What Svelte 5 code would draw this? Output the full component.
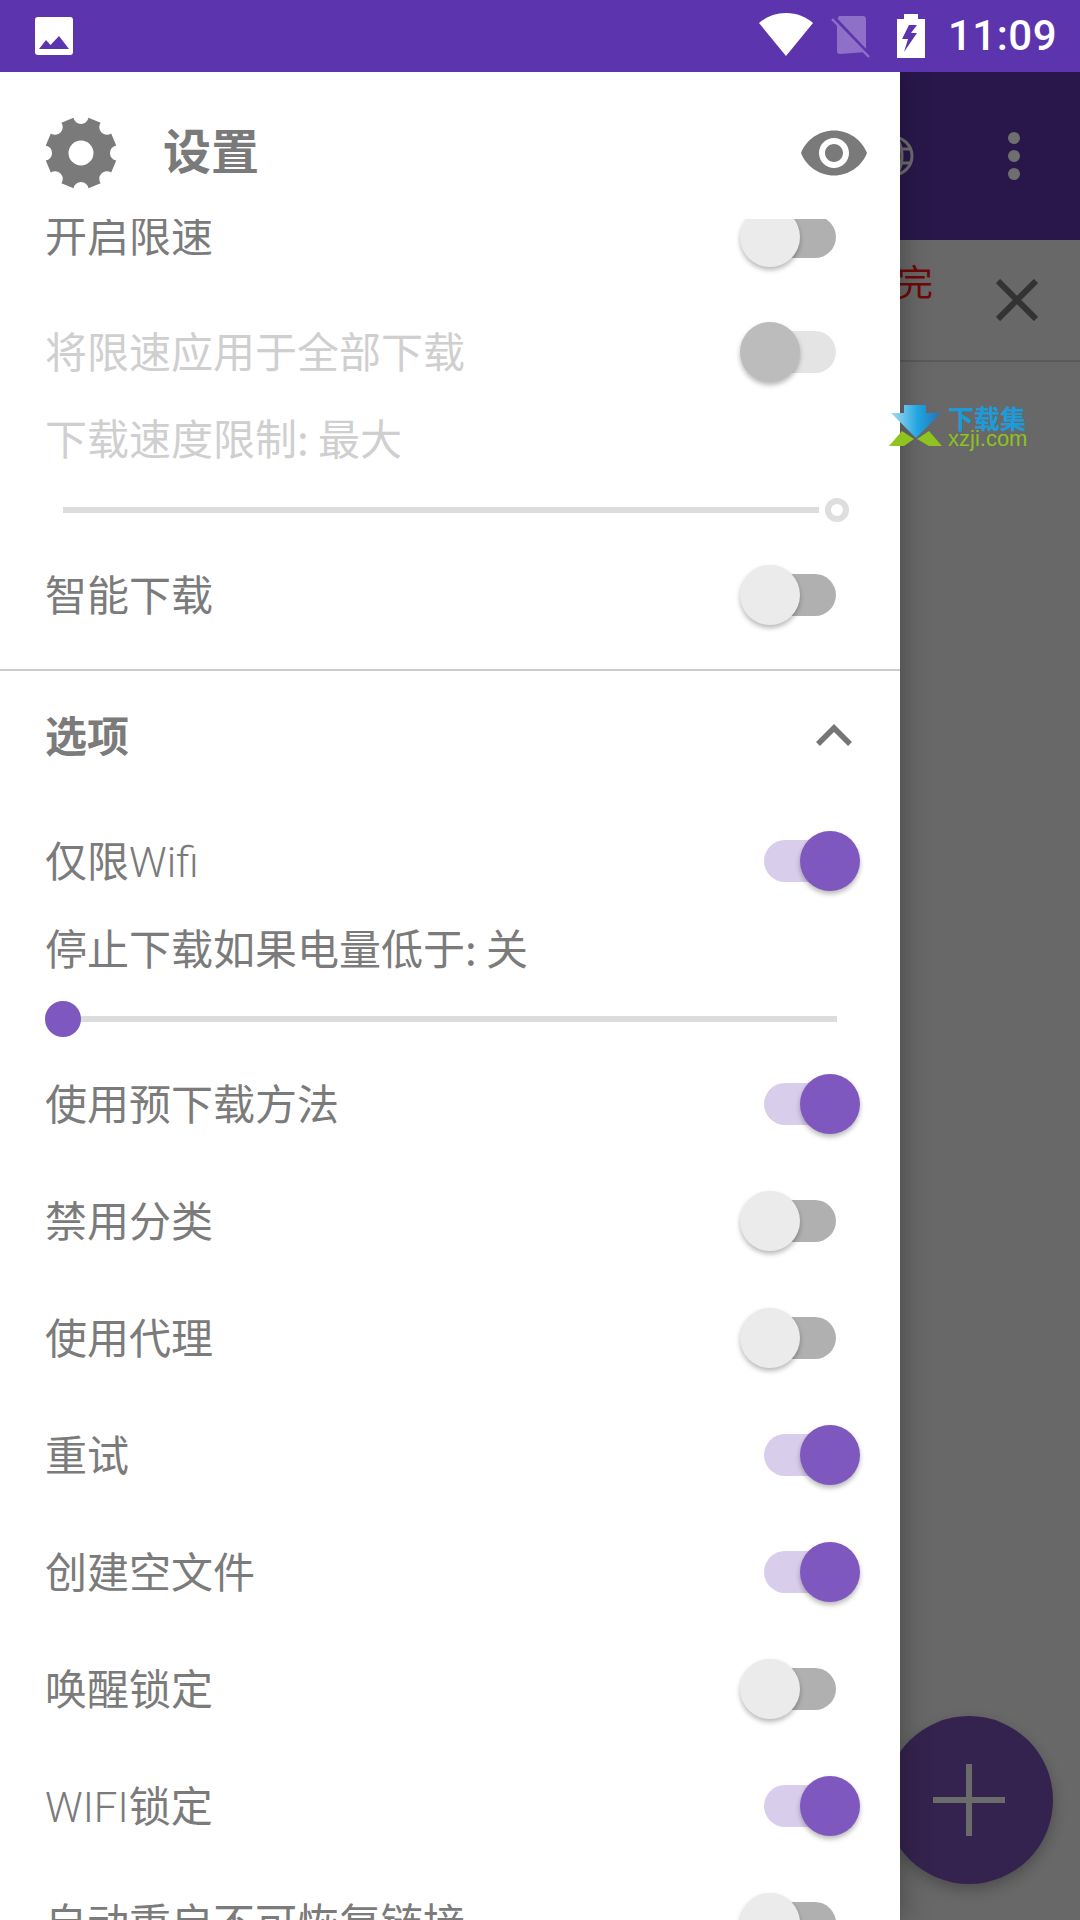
<script>
  const c = 36, R = 36;
  function gear() {
    let d = '';
    const half = 12 * Math.PI / 180;
    for (let i = 0; i < 8; i++) {
      const a = -Math.PI / 2 + i * Math.PI / 4;
      const p1 = [c + R * Math.cos(a - half), c + R * Math.sin(a - half)];
      const p2 = [c + R * Math.cos(a + half), c + R * Math.sin(a + half)];
      d += (i === 0 ? 'M' : 'L') + p1[0].toFixed(2) + ' ' + p1[1].toFixed(2);
      d += 'A7.6 7.6 0 0 0 ' + p2[0].toFixed(2) + ' ' + p2[1].toFixed(2);
    }
    return d + 'Z';
  }
  const gearPath = gear();
  const lower = [
    ['使用预下载方法', '', '', true],
    ['禁用分类', '', '', false],
    ['使用代理', '', '', false],
    ['重试', '', '', true],
    ['创建空文件', '', '', true],
    ['唤醒锁定', '', '', false],
    ['', 'WIFI', '锁定', true],
    ['自动重启不可恢复链接', '', '', false]
  ];
</script>

<div class="screen">
  <header class="status">
    <svg class="pic" viewBox="0 0 38 38"><path fill="#fff" d="M3 0h32a3 3 0 0 1 3 3v32a3 3 0 0 1-3 3H3a3 3 0 0 1-3-3V3a3 3 0 0 1 3-3z"/><path fill="#5c35ae" d="M4 32l7-9 4.500 5L24 19l10 13z"/></svg>
    <div class="status-right">
      <svg class="wifi" viewBox="0 0 54 44"><path fill="#fff" d="M27 43L0 10C7 4 16 0 27 0s20 4 27 10z"/></svg>
      <svg class="sim" viewBox="0 0 42 44"><path fill="#8e70c9" d="M9 2h24a3 3 0 0 1 3 3v33l-26 2a3 3 0 0 1-3-3V6z"/><path stroke="#5c35ae" stroke-width="4" d="M3 3l36 38"/><path stroke="#8e70c9" stroke-width="2.500" d="M2 5l37 38"/></svg>
      <svg class="batt" viewBox="0 0 28 44"><path fill="#fff" d="M7 0h14v5h7v39H0V5h7z"/><path fill="#5c35ae" d="M12 11h8l-6 8h6L7 38l4-13H5z"/></svg>
      <span class="time">11:09</span>
    </div>
  </header>

  <main class="stage">
    <section class="app">
      <div class="appbar">
        <svg class="globe" viewBox="0 0 44 44" fill="none" stroke="#6f6f6f" stroke-width="3"><circle cx="22" cy="22" r="19"/><ellipse cx="22" cy="22" rx="9" ry="19"/><path d="M4 15h36M4 29h36"/></svg>
        <div class="dots"><i></i><i></i><i></i></div>
      </div>
      <div class="task">
        <span class="done">完</span>
        <svg class="close" viewBox="0 0 42 42"><path stroke="#333" stroke-width="6" d="M2 2l38 38M40 2L2 40"/></svg>
      </div>
    </section>

    <div class="fab"><svg viewBox="0 0 72 72"><path fill="#6b6b6b" d="M33 0h6v33h33v6H39v33h-6V39H0v-6h33z"/></svg></div>

    <aside class="drawer">
      <div class="drawer-head">
        <svg class="gear" viewBox="0 0 72 72"><path fill="#7a7a7a" fill-rule="evenodd" d={gearPath + ' M36 23.500a12.500 12.500 0 1 0 0 25a12.500 12.500 0 1 0 0-25Z'}/></svg>
        <h1>设置</h1>
        <svg class="eye" viewBox="0 0 24 24"><path fill="#7a7a7a" d="M12 4.500C7 4.500 2.730 7.610 1 12c1.730 4.390 6 7.500 11 7.500s9.270-3.110 11-7.500c-1.730-4.390-6-7.500-11-7.500zM12 17c-2.760 0-5-2.240-5-5s2.240-5 5-5 5 2.240 5 5-2.240 5-5 5zm0-8c-1.660 0-3 1.340-3 3s1.340 3 3 3 3-1.340 3-3-1.340-3-3-3z"/></svg>
      </div>
      <div class="scroll">
        <div class="list">
          <div class="row first"><span class="t">开启限速</span><div class="sw"><b></b><u></u></div></div>
          <div class="row first disabled"><span class="t dt">将限速应用于全部下载</span><div class="sw dis"><b></b><u></u></div></div>
          <div class="label disabled lim">下载速度限制: 最大</div>
          <div class="slider end"><div class="track"></div><div class="ring"></div></div>
          <div class="row smart"><span class="t">智能下载</span><div class="sw"><b></b><u></u></div></div>
          <hr />
          <div class="section"><strong>选项</strong><svg class="chev" viewBox="0 0 38 24" fill="none" stroke="#757575" stroke-width="5.5"><path d="M3 21L19 5l16 16"/></svg></div>
          <div class="row wifi-row"><span class="t">仅限<span class="lat">Wifi</span></span><div class="sw on"><b></b><u></u></div></div>
          <div class="label stop">停止下载如果电量低于: 关</div>
          <div class="slider start"><div class="dot"></div><div class="track"></div></div>
          {#each lower as [text, lat, tail, on]}
            <div class="row"><span class="t">{text}{#if lat}<span class="lat">{lat}</span>{tail}{/if}</span><div class="sw" class:on><b></b><u></u></div></div>
          {/each}
        </div>
      </div>
    </aside>

    <div class="mark">
      <svg viewBox="0 0 54 44"><defs><linearGradient id="ar" x1="0" x2="1" y1="0" y2="0"><stop offset="0" stop-color="#a8dcf2"/><stop offset=".55" stop-color="#1ea4de"/><stop offset="1" stop-color="#2a6fb8"/></linearGradient></defs><path fill="url(#ar)" d="M15 1h22v8h15L27 34 2 9h13z"/><path fill="#8fc31f" d="M0 42l13-15 12 8-10 7zM28 35l12-8 13 15H40z"/></svg>
      <div class="mark-text"><span class="cn">下载集</span><span class="en">xzji.com</span></div>
    </div>
  </main>
</div>

<style>
  :global(body) { margin: 0; background: #666; }
  .screen { width: 1080px; height: 1920px; overflow: hidden; display: flex; flex-direction: column; font-family: "Noto Sans CJK SC", Roboto, sans-serif; }
  .status { height: 72px; flex: none; background: #5c35ae; display: flex; align-items: center; justify-content: space-between; padding: 0 23px 0 35px; box-sizing: border-box; }
  .pic { width: 38px; height: 38px; }
  .status-right { display: flex; align-items: center; }
  .wifi { width: 54px; height: 44px; margin-top: -2px; }
  .sim { width: 42px; height: 44px; margin-left: 17px; }
  .batt { width: 28px; height: 44px; margin-left: 25px; }
  .time { color: #fff; font-family: Roboto, sans-serif; font-size: 42px; font-weight: 500; letter-spacing: .5px; margin-left: 23px; line-height: 72px; }

  .stage { position: relative; flex: 1; overflow: hidden; }
  .app { height: 100%; background: #686868; }
  .appbar { height: 168px; background: #29174b; display: flex; align-items: center; justify-content: flex-end; padding-right: 60px; box-sizing: border-box; position: relative; }
  .globe { width: 44px; height: 44px; position: absolute; left: 871px; top: 62px; }
  .dots { display: flex; flex-direction: column; gap: 6px; }
  .dots i { width: 12px; height: 12px; border-radius: 50%; background: #6f6f6f; }
  .task { height: 122px; border-bottom: 2px solid #5a5a5a; box-sizing: border-box; display: flex; align-items: center; justify-content: flex-end; padding-right: 42px; gap: 63px; }
  .done { color: #6e0808; font-size: 36px; margin-top: -40px; font-weight: 400; }
  .close { width: 42px; height: 42px; margin-top: -1px; }

  .fab { position: absolute; left: 885px; top: 1644px; width: 168px; height: 168px; border-radius: 50%; background: #35234f; box-shadow: 0 6px 14px rgba(0,0,0,.25); display: flex; align-items: center; justify-content: center; }
  .fab svg { width: 72px; height: 72px; }

  .drawer { position: absolute; left: 0; top: 0; bottom: 0; width: 900px; background: #fff; box-shadow: 0 0 28px rgba(0,0,0,.35); display: flex; flex-direction: column; color: #7b7b7b; }
  .drawer-head { height: 147px; flex: none; position: relative; display: flex; align-items: center; padding-left: 45px; padding-top: 15px; box-sizing: border-box; }
  .gear { width: 72px; height: 72px; flex: none; }
  h1 { margin: 0 0 10px 46px; font-size: 48px; font-weight: 700; color: #7a7a7a; line-height: 1; }
  .eye { position: absolute; left: 798px; top: 45px; width: 72px; height: 72px; }
  .scroll { flex: 1; overflow: hidden; }
  .list { margin-top: -40px; display: flex; flex-direction: column; }
  .row { height: 117px; flex: none; display: flex; align-items: center; justify-content: space-between; padding: 0 40px 0 45px; box-sizing: border-box; font-size: 42px; }
  .t { margin-bottom: 6px; }
  .t.dt { margin-bottom: 4px; }
  .lat { font-family: Roboto, sans-serif; font-weight: 300; }
  .row.first { height: 115px; }
  .row.smart { height: 96px; }
  .row.wifi-row { height: 124px; }
  .label { height: 62px; flex: none; padding-left: 45px; font-size: 42px; line-height: 56px; }
  .label.stop { height: 50px; line-height: 48px; }
  .disabled { color: #cfcfcf; }
  .sw { position: relative; width: 120px; height: 60px; flex: none; }
  .sw b { position: absolute; left: 24px; top: 9px; width: 72px; height: 42px; border-radius: 21px; background: #b0b0b0; }
  .sw u { position: absolute; left: 0; top: 0; width: 60px; height: 60px; border-radius: 50%; background: #ebebeb; box-shadow: 0 3px 5px rgba(0,0,0,.28); }
  .sw.dis b { background: #e4e4e4; }
  .sw.dis u { background: #bcbcbc; }
  .sw.on b { background: #d8cdeb; }
  .sw.on u { left: 60px; background: #7e57bf; }
  .slider { flex: none; position: relative; display: flex; align-items: center; padding-left: 63px; box-sizing: border-box; width: 900px; }
  .slider .track { height: 6px; background: #dcdcdc; }
  .slider.end { height: 74px; margin-top: 2px; }
  .slider.end .track { width: 756px; }
  .ring { width: 24px; height: 24px; border: 6px solid #dedede; border-radius: 50%; background: #fff; box-sizing: border-box; margin-left: 6px; }
  .slider.start { height: 44px; margin: 24px 0 4.5px; }
  .slider.start .track { width: 774px; }
  .dot { position: absolute; left: 45px; top: 4px; width: 36px; height: 36px; border-radius: 50%; background: #7e57bf; }
  hr { margin: 26px 0 0; border: 0; height: 2px; flex: none; background: #ccc; }
  .section { height: 128px; flex: none; display: flex; align-items: center; justify-content: space-between; padding: 0 47px 0 45px; box-sizing: border-box; }
  .section strong { font-size: 42px; font-weight: 700; margin-bottom: 4px; }
  .chev { width: 38px; height: 24px; }

  .mark { position: absolute; left: 889px; top: 332px; display: flex; gap: 5px; }
  .mark svg { width: 54px; height: 44px; }
  .mark-text { display: flex; flex-direction: column; width: 80px; }
  .cn { color: #1d9bd9; font-size: 26px; font-weight: 700; line-height: 24px; margin-top: 2px; white-space: nowrap; }
  .en { color: #8cc11f; font-size: 22px; line-height: 17px; font-family: "Liberation Sans", sans-serif; }
</style>
